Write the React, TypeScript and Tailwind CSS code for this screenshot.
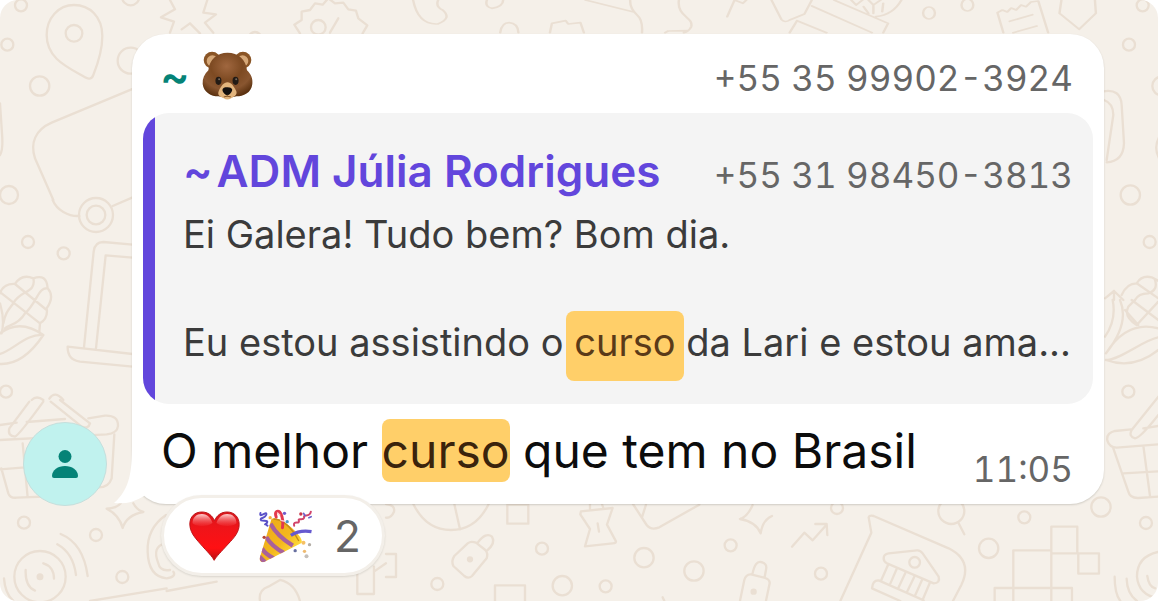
import React from 'react'

function Wallpaper() {
  return (
    <svg
      className="absolute inset-0 h-full w-full text-[#eadfd3]"
      viewBox="0 0 1158 601"
      preserveAspectRatio="xMinYMin slice"
      fill="none"
      stroke="currentColor"
      strokeWidth="7"
      strokeLinejoin="round"
      strokeLinecap="round"
      aria-hidden="true"
    >
      {/* top left: pin, starburst, discount badge, scooter */}
      <g transform="scale(.3333)">
        <path d="M140 105C140 55 175 15 222 15S307 50 307 108C307 155 290 200 280 225C275 238 265 238 255 232C200 200 140 175 140 105Z" />
        <circle cx="222" cy="100" r="25" />
        <circle cx="63" cy="16" r="18" />
        <circle cx="22" cy="134" r="18" />
        <circle cx="119" cy="258" r="29" />
        <circle cx="392" cy="-10" r="26" />
        <circle cx="392" cy="182" r="39" />
        <circle cx="27" cy="585" r="27" />
        <circle cx="765" cy="115" r="19" />
        <path d="M510 0L525 28L483 52L522 65L510 98M545 88L570 70L600 100M640 98L615 68L648 43L610 38L622 0" />
        <path d="M900 100L883 74L905 60L905 35L930 30L945 10L968 14L985 -5L1005 10L1030 8L1045 28L1068 32L1075 55L1102 76L1088 100" />
        <circle cx="955" cy="82" r="22" />
        <path d="M1015 55L990 98" />
        <path d="M400 266L155 368C105 390 90 430 105 475L160 600" />
        <path d="M0 310L6 400Q10 450 0 465" />
        <circle cx="288" cy="645" r="51" />
        <circle cx="288" cy="645" r="28" />
        <path d="M158 600C170 630 205 650 238 648M338 618L398 592" />
      </g>

      {/* left: laptop and corn */}
      <g transform="translate(0 200) scale(.3333)">
        <circle cx="84" cy="126" r="18" />
        <circle cx="191" cy="160" r="18" />
        <circle cx="18" cy="575" r="18" />
        <path d="M398 134L310 126Q284 126 281 155L252 442M398 173L317 166L288 445M398 462L203 440Q202 480 240 485L398 500" />
        <path d="M0 280Q10 250 45 252Q65 220 100 235Q140 220 143 265Q165 290 140 325Q145 355 120 370L118 395M45 252L140 330M5 280L120 370M143 265C115 260 110 310 75 340C55 375 25 375 15 385M100 235C110 280 60 270 40 310C25 330 15 340 10 370" />
        <path d="M0 310Q15 360 5 400M0 400Q60 355 130 405Q70 495 0 492M130 405C80 400 40 450 0 462" />
        <path d="M95 600Q110 585 130 600M148 596Q165 570 190 600" />
      </g>

      {/* bottom left: basket, radar, star, doughnut, tablet */}
      <g transform="translate(0 400) scale(.3333)">
        <path d="M88 5L28 85Q22 108 45 110Q55 108 130 5M152 5L245 80Q265 88 270 70L180 0" />
        <path d="M0 75L50 68M80 66L195 57M265 55L315 47Q355 45 354 78Q352 100 320 103L0 120" />
        <path d="M343 103L335 235Q325 265 290 262M4 205L25 280Q30 295 50 293L260 285M68 130L83 292M0 208L75 202" />
        <circle cx="72" cy="368" r="18" />
        <circle cx="288" cy="405" r="18" />
        <circle cx="367" cy="531" r="18" />
        <circle cx="120" cy="530" r="77" />
        <circle cx="120" cy="530" r="7" fill="currentColor" />
        <path d="M77 510Q75 560 105 572M130 490Q162 500 162 536M172 433Q220 460 228 525M182 402Q250 430 263 528M12 535Q15 580 40 603" />
        <path d="M320 326Q350 325 362 310M400 310Q410 330 430 336Q380 345 368 384Q358 345 320 326" />
        <path d="M498 345Q440 385 443 455Q445 530 500 535Q530 530 520 515M495 430Q455 440 475 490Q480 515 510 510" />
        <path d="M270 603L500 565M500 573L650 545M780 603Q775 570 805 560L840 540Q885 550 900 603" />
        <path d="M1072 520V582H1122V500M1122 515L1158 490" />
      </g>

      {/* bottom centre: ball, tags, bow */}
      <g transform="translate(386 480) scale(.3333)">
        <path d="M82 72Q120 150 195 150T308 72M205 72L222 148" />
        <path d="M0 72Q28 75 24 95Q15 115 0 113M364 74V131H427V74ZM0 222H30V291H0M327 363V316H417V363" />
        <path d="M205 228L245 190Q255 182 270 188L298 210Q307 220 302 235L258 288Q247 298 235 288L202 258Q195 243 205 228ZM275 188Q300 155 318 170Q330 190 303 212" />
        <circle cx="252" cy="238" r="6" fill="currentColor" />
        <circle cx="468" cy="206" r="18" />
        <circle cx="154" cy="312" r="18" />
        <circle cx="529" cy="317" r="29" />
        <circle cx="659" cy="319" r="18" />
        <circle cx="774" cy="233" r="29" />
        <circle cx="924" cy="273" r="29" />
        <circle cx="1034" cy="196" r="18" />
        <path d="M585 94L680 84L663 134L690 184Q690 190 680 190L597 199L612 147L583 103ZM612 72V88M648 72L652 84M635 130L639 155" />
        <path d="M741 72L782 135Q795 152 820 142L940 74M780 74L768 112M830 352L835 363" />
        <path d="M1100 75Q1085 110 1062 117Q1110 125 1124 160Q1130 120 1158 108" />
        <path d="M1062 363L1075 300Q1080 282 1095 283L1138 294Q1155 300 1150 315L1140 363M1100 280Q1108 242 1125 246Q1145 250 1140 270L1136 292" />
        <circle cx="1103" cy="335" r="6" fill="currentColor" />
      </g>

      {/* bottom right: trend, bank card, squares */}
      <g transform="translate(772 480) scale(.3333)">
        <path d="M60 200L97 158L122 181L163 135M130 132H164L166 165" />
        <circle cx="195" cy="84" r="18" />
        <circle cx="147" cy="281" r="18" />
        <path d="M205 363L298 158L290 112Q292 105 305 108L530 205C590 235 585 280 568 315L543 363" />
        <path d="M335 235Q335 222 350 220L435 211Q445 210 452 220L500 290Q505 310 485 310L345 250Q335 245 335 235Z" />
        <circle cx="428" cy="247" r="16" />
        <path d="M348 255L328 300M374 267L355 311M400 279L380 322M427 290L406 334M450 300L430 345M473 310L453 357M455 361L320 301Q302 300 300 325L385 363" />
        <circle cx="538" cy="93" r="39" />
        <path d="M560 130L577 163" />
        <circle cx="757" cy="112" r="18" />
        <circle cx="650" cy="205" r="29" />
        <circle cx="987" cy="81" r="29" />
        <circle cx="1122" cy="129" r="18" />
        <path d="M668 363V324H900V363M724 363V211H838V363M838 220V140H916V220M838 220H981V281H919V220" />
        <path d="M1158 216Q1095 230 1095 290Q1100 345 1158 355M1126 288Q1130 320 1150 325M1064 296Q1065 340 1095 363M1028 290Q1028 340 1045 363" />
      </g>

      {/* right edge: paper clip, corn, basket */}
      <g transform="translate(1080 0) scale(.3333)">
        <circle cx="188" cy="16" r="18" />
        <circle cx="147" cy="134" r="18" />
        <circle cx="245" cy="258" r="28" />
        <circle cx="151" cy="585" r="29" />
        <circle cx="209" cy="726" r="18" />
        <path d="M70 274Q122 265 125 315L132 430Q130 485 80 487M72 300Q100 310 100 345L80 480M245 400Q215 440 240 480" />
        <path d="M75 895L102 873L130 900M102 873V900M125 885Q140 850 170 850Q185 825 215 832L240 845M170 850L235 895M225 840Q235 870 205 880Q175 880 165 900" />
      </g>
      <g transform="translate(1080 300) scale(.3333)">
        <path d="M98 0Q110 60 75 110M120 0Q150 70 78 160M78 160Q140 60 235 85M78 180Q160 210 235 150M78 180C120 180 190 120 235 112M135 30L175 75M155 0L235 60M235 5L170 75Q130 50 145 20L165 0" />
        <circle cx="145" cy="275" r="18" />
        <path d="M235 290L155 390Q145 410 165 415Q180 415 235 345M153 388L105 393Q78 400 82 422Q88 442 110 443L235 433M190 385L235 378M100 445L145 575Q150 595 175 594L235 590M190 437L210 588M130 520L235 514" />
      </g>

      {/* strip over the bubble */}
      <g transform="translate(386 0) scale(.4923 .3333)" strokeWidth="5">
        <path d="M55 0Q65 75 105 72Q135 55 115 30Q100 20 106 0M205 0Q200 20 215 25Q238 20 238 0M232 98Q235 68 250 68Q268 70 269 98M333 98L337 70L365 62L370 72L395 68L402 98" />
        <path d="M405 0L503 36M496 0Q495 25 510 45Q522 60 520 98M595 0C590 50 625 50 620 80Q615 95 605 98M567 98L573 93L613 92M693 50L708 0L725 10L732 0" />
        <path d="M783 0L803 58Q810 70 820 60L850 42L865 0M865 18L987 98M835 62L895 98M835 62L820 98M910 0L1020 70L1010 98M1047 0Q1030 45 995 50M945 0L955 15L968 0M970 20L980 40M980 0L990 15L1005 0M990 15V40M1010 10L1008 35" />
        <ellipse cx="1103" cy="39" rx="12" ry="18" />
        <ellipse cx="1181" cy="15" rx="12" ry="18" />
        <path d="M1254 98L1242 38L1252 30L1262 36L1270 24L1280 30L1290 15L1300 20L1310 6L1325 3L1345 98M1267 64L1313 44M1274 98L1322 78M1372 0L1368 40L1408 88L1442 40L1440 0" />
      </g>
    </svg>
  )
}

function Bear() {
  return (
    <svg viewBox="35 35 152 146" className="h-[49px] w-[51px]" role="img" aria-label="bear">
      <defs>
        <radialGradient id="fur" cx=".48" cy=".3" r=".7">
          <stop offset="0" stopColor="#a0673f" />
          <stop offset=".45" stopColor="#7d4a22" />
          <stop offset=".75" stopColor="#895630" />
          <stop offset="1" stopColor="#5c3210" />
        </radialGradient>
      </defs>
      <circle cx="65" cy="62" r="25" fill="#8a5526" />
      <circle cx="157" cy="62" r="25" fill="#8a5526" />
      <circle cx="66" cy="65" r="17" fill="#d6a878" />
      <circle cx="156" cy="65" r="17" fill="#d6a878" />
      <path d="M111 40C143 40 166 60 169 92C182 104 187 118 185 133C182 160 158 170 138 170Q111 178 84 170C62 170 40 158 37 133C36 117 42 103 54 92C57 60 80 40 111 40Z" fill="url(#fur)" />
      <path d="M111 128C122 128 130 140 137 154C142 168 128 172 122 176Q110 183 100 176C88 171 80 167 85 154C91 140 100 128 111 128Z" fill="#e2b47c" />
      <ellipse cx="84" cy="124" rx="9" ry="12" fill="#231b15" />
      <ellipse cx="135" cy="124" rx="9" ry="12" fill="#231b15" />
      <circle cx="86" cy="119" r="3" fill="#75685b" />
      <circle cx="137" cy="119" r="3" fill="#75685b" />
      <path d="M96 152C96 144 103 143 110 143S125 145 125 151C124 158 116 166 110 167C104 166 97 159 96 152Z" fill="#14100e" />
      <path d="M110 165V170M100 172Q110 168 121 172" stroke="#8b5a2b" strokeWidth="3" fill="none" />
    </svg>
  )
}

function Heart() {
  return (
    <svg viewBox="88 61 152 150" className="h-[50px] w-[51px]" role="img" aria-label="heart">
      <defs>
        <linearGradient id="heart" x1="0" y1="0" x2="0" y2="1">
          <stop offset="0" stopColor="#d8171c" />
          <stop offset=".35" stopColor="#f01419" />
          <stop offset=".75" stopColor="#ff1013" />
          <stop offset="1" stopColor="#b90e12" />
        </linearGradient>
        <linearGradient id="shine" x1="0" y1="0" x2="0" y2="1">
          <stop offset="0" stopColor="#ffd0d0" />
          <stop offset="1" stopColor="#f4383c" stopOpacity=".3" />
        </linearGradient>
      </defs>
      <path d="M163 209C158 198 142 183 122 160C102 138 90 122 90 100C90 78 105 64 126 64C144 64 157 74 164 90C171 74 184 64 202 64C223 64 238 79 238 101C238 124 224 140 205 160C184 183 169 198 163 209Z" fill="url(#heart)" stroke="#bd1519" strokeWidth="3" />
      <path d="M98 98C98 80 110 70 126 70C144 70 155 85 158 97C146 108 110 110 98 98ZM170 97C173 85 184 70 202 70C218 70 230 80 230 98C218 110 182 108 170 97Z" fill="url(#shine)" />
    </svg>
  )
}

function PartyPopper() {
  return (
    <svg viewBox="298 54 164 162" className="h-[54px] w-[55px]" role="img" aria-label="party popper">
      <defs>
        <linearGradient id="cone" x1="0" y1="0" x2="1" y2="1">
          <stop offset="0" stopColor="#e9a51b" />
          <stop offset=".55" stopColor="#f4b71c" />
          <stop offset=".8" stopColor="#ffe13d" />
          <stop offset="1" stopColor="#c98a25" />
        </linearGradient>
        <clipPath id="coneShape">
          <path d="M338 84C352 76 378 92 400 112C420 130 433 148 428 156L320 211C310 217 300 212 303 200Z" />
        </clipPath>
      </defs>
      <g clipPath="url(#coneShape)">
        <path d="M290 60H440V220H290Z" fill="url(#cone)" />
        <path d="M335 98Q355 135 402 164M322 138Q338 165 375 186M309 172Q320 190 345 202M300 195L320 215" stroke="#a8619c" strokeWidth="13" fill="none" />
      </g>
      <path d="M344 84Q385 85 420 150" stroke="#c58a18" strokeWidth="4" fill="none" />
      <g fill="none" strokeLinecap="round" strokeLinejoin="round">
        <path d="M305 66C300 85 327 56 322 72C318 83 300 80 307 88C315 91 330 86 324 96C316 104 317 96 326 104" stroke="#5950c8" strokeWidth="6" />
        <path d="M352 78C346 62 358 54 366 68Q374 84 371 110" stroke="#e3384c" strokeWidth="9" />
        <path d="M356 66L363 72M366 88L374 90" stroke="#ffc5c8" strokeWidth="4" />
        <path d="M406 104C401 87 424 101 420 89C416 79 433 90 436 80C432 66 453 82 456 62" stroke="#d1446a" strokeWidth="6" />
        <path d="M434 67L439 74M450 80L457 77" stroke="#6b60cb" strokeWidth="5" />
        <path d="M396 133Q423 116 458 122" stroke="#6559cf" strokeWidth="10" strokeLinecap="butt" />
      </g>
      <circle cx="377" cy="67" r="5" fill="#715bcb" />
      <circle cx="385" cy="92" r="5" fill="#519ac6" />
      <circle cx="426" cy="69" r="5" fill="#c93849" />
      <circle cx="316" cy="139" r="5" fill="#b64635" />
      <circle cx="334" cy="80" r="5" fill="#f3b03b" />
      <circle cx="434" cy="155" r="6" fill="#f6c064" />
      <circle cx="452" cy="161" r="5" fill="#b4aea6" />
      <circle cx="437" cy="181" r="5" fill="#efba70" />
      <circle cx="443" cy="196" r="6" fill="#c4bfba" />
      <circle cx="409" cy="179" r="5" fill="#6770a0" />
    </svg>
  )
}

function Quote() {
  return (
    <blockquote className="mx-[11px] flex overflow-hidden rounded-[26px] bg-[#f4f4f4]">
      <div className="w-3 shrink-0 bg-[#6246dc]" />
      <div className="min-w-0 flex-1 pt-[30px] pr-5 pb-[35px] pl-7">
        <div className="flex items-start justify-between">
          <h2 className="flex gap-1 text-[44px] leading-[56px] font-semibold whitespace-nowrap text-[#6246dc]">
            <span>~</span>
            <span>ADM Júlia Rodrigues</span>
          </h2>
          <span className="pt-1 text-[35px] leading-[56px] whitespace-nowrap text-[#666] tabular-nums">+55 31 98450-3813</span>
        </div>
        <p className="mt-1 text-[38px] leading-[54px] whitespace-nowrap text-[#3b3b3b]">Ei Galera! Tudo bem? Bom dia.</p>
        <p className="mt-[54px] text-[38px] leading-[54px] whitespace-nowrap text-[#3b3b3b]">
          Eu estou assistindo o <mark className="-mx-2 rounded-lg bg-[#ffcf69] px-2 pt-2 pb-4 text-[#5a3a18]">curso</mark> da Lari e estou ama...
        </p>
      </div>
    </blockquote>
  )
}

export default function App() {
  return (
    <main className="relative min-h-screen overflow-hidden rounded-[18px] bg-[#f5f0e9] font-['Inter','Liberation_Sans',sans-serif]">
      <Wallpaper />

      <div className="relative flex items-end gap-[25px] pt-[34px] pr-[54px] pl-[23px]">
        <div className="-mb-[2px] flex size-[84px] shrink-0 items-center justify-center rounded-full border border-[#c5dfdc] bg-[#c0f2ee]">
          <svg viewBox="0 0 26 28" className="h-7 w-[26px] fill-[#058377]" aria-hidden="true">
            <circle cx="13" cy="6.5" r="6.5" />
            <path d="M0 26C0 20 6 16 13 16S26 20 26 26Q26 28 24 28H2Q0 28 0 26Z" />
          </svg>
        </div>

        <article className="relative min-w-0 flex-1 rounded-[34px] bg-white shadow-[0_1px_2px_rgba(60,60,50,0.2)]">
          <svg viewBox="0 0 30 64" className="absolute bottom-0 -left-[18px] h-16 w-[30px] fill-white" aria-hidden="true">
            <path d="M18 0C18 30 17 48 0 63Q16 65 30 56V0Z" />
          </svg>

          <header className="flex h-[79px] items-center justify-between pt-1 pr-[31px] pl-7">
            <div className="flex items-center gap-3">
              <span className="text-[44px] leading-[56px] font-semibold text-[#058377]">~</span>
              <Bear />
            </div>
            <span className="pt-1 text-[35px] leading-[56px] whitespace-nowrap text-[#666] tabular-nums">+55 35 99902-3924</span>
          </header>

          <Quote />

          <div className="flex h-[100px] justify-between pr-[31px] pl-[29px]">
            <p className="pt-[15px] text-[48px] leading-[64px] whitespace-nowrap text-[#0c0c0c]">
              O melhor <mark className="rounded-lg bg-[#ffcf69] py-[2px] text-[#3a230c]">curso</mark> que tem no Brasil
            </p>
            <time className="pt-[37px] text-[35px] leading-[56px] text-[#666] tabular-nums">11:05</time>
          </div>

          <button className="absolute -bottom-[72px] left-[29px] flex h-[81px] w-[224px] items-center gap-[18px] rounded-full border-[3px] border-[#f3efe9] bg-white pl-[25px] text-[#666] shadow-[0_1px_2px_rgba(60,60,50,0.15)]">
            <Heart />
            <PartyPopper />
            <span className="ml-[3px] text-[44px]">2</span>
          </button>
        </article>
      </div>
    </main>
  )
}
